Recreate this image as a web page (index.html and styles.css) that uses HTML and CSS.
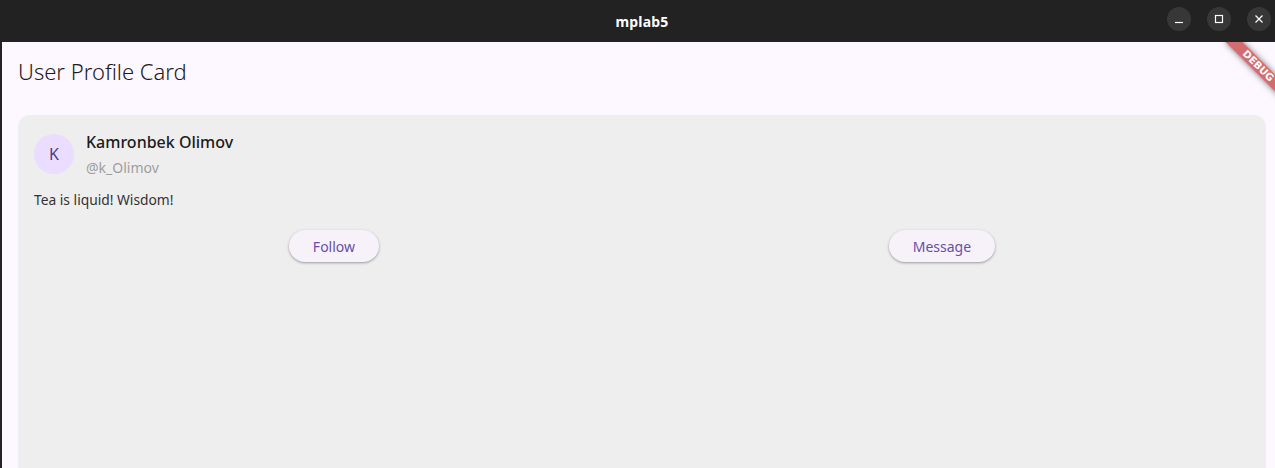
FILE: index.html
```html
<!DOCTYPE html>
<html lang="en">
<head>
<meta charset="utf-8">
<title>mplab5</title>
<link rel="stylesheet" href="styles.css">
</head>
<body>
<div class="window">
  <header class="titlebar">
    <div class="titlebar-title">mplab5</div>
    <div class="controls">
      <button class="ctl" aria-label="Minimize">
        <svg width="10" height="10" viewBox="0 0 10 10"><path d="M1 8.5 H9" stroke="#fff" stroke-width="1.2" fill="none"/></svg>
      </button>
      <button class="ctl" aria-label="Maximize">
        <svg width="10" height="10" viewBox="0 0 10 10"><rect x="1.5" y="1.5" width="7" height="7" stroke="#fff" stroke-width="1.2" fill="none"/></svg>
      </button>
      <button class="ctl" aria-label="Close">
        <svg width="10" height="10" viewBox="0 0 10 10"><path d="M1.5 1.5 L8.5 8.5 M8.5 1.5 L1.5 8.5" stroke="#fff" stroke-width="1.2" fill="none"/></svg>
      </button>
    </div>
  </header>
  <main class="content">
    <div class="appbar"><h1 class="appbar-title">User Profile Card</h1></div>
    <div class="body">
      <section class="card">
        <div class="profile">
          <div class="avatar">K</div>
          <div class="names">
            <div class="name">Kamronbek Olimov</div>
            <div class="handle">@k_Olimov</div>
          </div>
        </div>
        <p class="bio">Tea is liquid! Wisdom!</p>
        <div class="actions">
          <button class="btn">Follow</button>
          <button class="btn">Message</button>
        </div>
      </section>
    </div>
    <div class="banner"><span>DEBUG</span></div>
  </main>
</div>
</body>
</html>
```
FILE: styles.css
```css
html, body {
  margin: 0;
  padding: 0;
  width: 1275px;
  height: 468px;
  overflow: hidden;
  background: #222222;
}
.window {
  width: 1284px;
  height: 468px;
  display: flex;
  flex-direction: column;
  font-family: "Noto Sans", "DejaVu Sans", sans-serif;
}
.titlebar {
  height: 42px;
  flex: none;
  background: #222222;
  display: flex;
  align-items: center;
  justify-content: center;
  position: relative;
}
.titlebar-title {
  color: #ffffff;
  font-weight: 700;
  font-size: 14px;
  letter-spacing: 0.2px;
}
.controls {
  position: absolute;
  right: 13px;
  top: 7px;
  display: flex;
  gap: 16px;
}
.ctl {
  width: 24px;
  height: 24px;
  border-radius: 50%;
  border: none;
  background: #373737;
  padding: 0;
  display: flex;
  align-items: center;
  justify-content: center;
}
.content {
  flex: 1;
  min-height: 0;
  margin: 0 2px;
  background: #fdf7ff;
  position: relative;
  overflow: hidden;
  display: flex;
  flex-direction: column;
}
.appbar {
  flex: none;
  height: 57px;
  display: flex;
  align-items: center;
  padding: 0 16px;
}
.appbar-title {
  margin: 0;
  font-weight: 300;
  font-size: 22px;
  color: #1d1b20;
  letter-spacing: 0;
}
.body {
  padding: 16px;
  flex: 1;
  min-height: 0;
  display: flex;
}
.card {
  flex: 1;
  background: #eeeeee;
  border-radius: 12px;
  padding: 16px;
  min-height: 400px;
}
.profile {
  display: flex;
  align-items: flex-start;
  gap: 12px;
}
.avatar {
  margin-top: 3px;
  width: 40px;
  height: 40px;
  border-radius: 50%;
  background: #eaddff;
  color: #4f378b;
  font-size: 16px;
  display: flex;
  align-items: center;
  justify-content: center;
}
.names {
  display: flex;
  flex-direction: column;
}
.name {
  font-size: 16px;
  font-weight: 500;
  color: #1d1b20;
  line-height: 22px;
}
.handle {
  margin-top: 5px;
  font-size: 14px;
  color: #9e9e9e;
  line-height: 20px;
}
.bio {
  margin: 12px 0 0;
  font-size: 13.8px;
  color: #333333;
  line-height: 20px;
}
.actions {
  margin-top: 20px;
  display: flex;
  justify-content: space-around;
}
.btn {
  height: 32px;
  padding: 0 24px;
  border: none;
  border-radius: 16px;
  background: #f7f2fa;
  color: #6750a4;
  font-family: inherit;
  font-size: 14px;
  box-shadow: 0 1px 2px rgba(0,0,0,0.25), 0 1px 3px 1px rgba(0,0,0,0.08);
}
.banner {
  position: absolute;
  right: -16px;
  top: 18px;
  width: 80px;
  height: 12px;
  background: rgba(183, 28, 28, 0.63);
  box-shadow: 0 0 6px rgba(0,0,0,0.5);
  transform: rotate(45deg);
  display: flex;
  align-items: center;
  justify-content: center;
}
.banner span {
  color: #ffffff;
  font-size: 10px;
  font-weight: 900;
  line-height: 12px;
  font-family: "DejaVu Sans", sans-serif;
}
```
